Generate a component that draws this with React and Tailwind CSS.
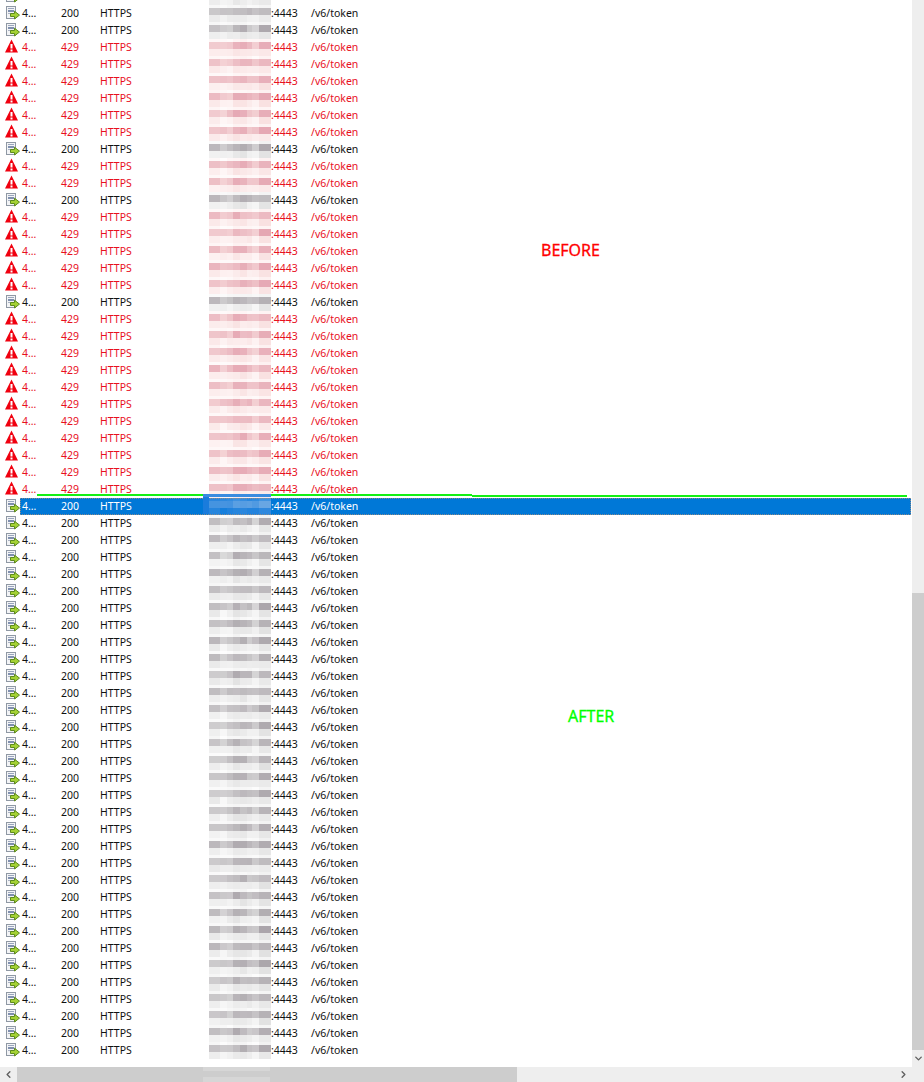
import { ChevronDown, ChevronLeft, ChevronRight } from "lucide-react";

const RED_ROWS = new Set([
  3, 4, 5, 6, 7, 8, 10, 11, 13, 14, 15, 16, 17, 19, 20, 21, 22, 23, 24, 25, 26, 27, 28, 29,
]);
const SELECTED = 30;
const CELL_WIDTHS = [11, 7, 6, 7, 7, 5, 7, 12];
// rough darkness of each mosaic column, the pattern runs down the whole list
const COLUMN_BIAS = [0.45, 0.2, 0.35, 0.75, 0.7, 0.5, 0.3, 0.85];

const hash = (a, b) => {
  const v = Math.sin(a * 12.9898 + b * 78.233) * 43758.5453;
  return v - Math.floor(v);
};

const mix = (from, to, t) => {
  const c = from.map((x, i) => Math.round(x + (to[i] - x) * t));
  return `rgb(${c[0]},${c[1]},${c[2]})`;
};

const PALETTE = {
  normal: { dark: [[226, 226, 226], [164, 158, 164]], light: [[252, 252, 252], [222, 222, 222]], top: [[255, 255, 255], [240, 240, 240]] },
  red: { dark: [[248, 222, 222], [226, 158, 172]], light: [[255, 250, 250], [248, 222, 222]], top: [[255, 255, 255], [253, 238, 238]] },
  selected: { dark: [[40, 132, 222], [116, 172, 228]], light: [[16, 124, 220], [52, 138, 222]], top: [[26, 126, 220], [70, 150, 226]] },
};

const Strip = ({ row, band, height, colors }) => (
  <div className="flex" style={{ height }}>
    {CELL_WIDTHS.map((w, i) => {
      const t = COLUMN_BIAS[i] * 0.65 + hash(row * 3 + band, i + 1) * 0.35;
      return <div key={i} style={{ width: w, background: mix(colors[0], colors[1], t) }} />;
    })}
  </div>
);

const Mosaic = ({ row, tone }) => {
  const p = PALETTE[tone];
  return (
    <div className="flex w-[62px] shrink-0 flex-col">
      <Strip row={row} band={0} height={3} colors={p.top} />
      <Strip row={row} band={1} height={7} colors={p.dark} />
      <Strip row={row} band={2} height={7} colors={p.light} />
    </div>
  );
};

const DocIcon = () => (
  <svg width="15" height="15" viewBox="0 0 15 15" className="block">
    <rect x="1.5" y="1.5" width="9" height="12" fill="#f3f4f6" stroke="#8f98a4" />
    <rect x="3" y="3" width="6" height="1" fill="#9aa6bd" />
    <rect x="3" y="5" width="6" height="2" fill="#7f8fae" />
    <rect x="3" y="8" width="3" height="1" fill="#a9b2c2" />
    <path d="M5.5 8.5h4V6.2l5 3.9-5 3.9v-2.5h-4z" fill="#a4d233" stroke="#5d8a1c" strokeWidth="1" />
  </svg>
);

const WarnIcon = () => (
  <svg width="15" height="15" viewBox="0 0 15 15" className="block">
    <path d="M6.5 0.5 13 13.5H0z" fill="#f0000f" />
    <rect x="5.5" y="5" width="2" height="4.5" fill="#fff" />
    <rect x="5.5" y="10.5" width="2" height="2" fill="#fff" />
  </svg>
);

const Row = ({ index }) => {
  const red = RED_ROWS.has(index);
  const selected = index === SELECTED;
  const tone = selected ? "selected" : red ? "red" : "normal";
  const text = selected ? "text-white" : red ? "text-[#e8101e]" : "text-[#111111]";
  return (
    <div className="mr-px flex h-[17px] items-stretch">
      <div className="w-[20px] shrink-0 pl-[5px]">{red ? <WarnIcon /> : <DocIcon />}</div>
      <div
        className={`flex min-w-0 flex-1 items-stretch leading-[16px] ${text} ${
          selected ? "bg-[#0078d7] outline outline-dotted outline-[#8a8a8a] -outline-offset-1" : ""
        }`}
      >
        <div className="w-[41px] shrink-0 pl-[2px]">4…</div>
        <div className="w-[39px] shrink-0">{red ? "429" : "200"}</div>
        <div className="w-[109px] shrink-0">HTTPS</div>
        <Mosaic row={index} tone={tone} />
        <div className="w-[40px] shrink-0">:4443</div>
        <div>/v6/token</div>
      </div>
    </div>
  );
};

export default function App() {
  const rows = Array.from({ length: 63 }, (_, i) => i);
  return (
    <div className="flex h-[1082px] w-[924px] flex-col overflow-hidden bg-white font-['Noto_Sans',sans-serif] text-[10.5px]">
      <div className="flex min-h-0 flex-1">
        <div className="relative min-w-0 flex-1 overflow-hidden">
          <div className="mt-[-12px]">
            {rows.map((i) => (
              <Row key={i} index={i} />
            ))}
          </div>
          {/* annotations drawn over the capture */}
          <div className="absolute left-[37px] top-[494px] h-[2px] w-[435px] bg-[#14f014]" />
          <div className="absolute left-[472px] top-[495px] h-[2px] w-[435px] bg-[#14f014]" />
          <div className="absolute left-[203px] top-[494px] h-[3px] w-[68px] bg-[#3a8ce0]" />
          <div className="absolute left-[203px] top-[497px] h-[17px] w-[6px] bg-[#1a7cdc]" />
          <div className="absolute left-[541px] top-[239px] text-[16px] leading-[22px] text-[#ff0000] [-webkit-text-stroke:0.3px_#ff0000]">
            BEFORE
          </div>
          <div className="absolute left-[568px] top-[705px] text-[16px] leading-[22px] text-[#00ff00] [-webkit-text-stroke:0.3px_#00ff00]">
            AFTER
          </div>
        </div>
        <div className="flex w-[12px] shrink-0 flex-col bg-[#eeeeee]">
          <div className="h-[593px] shrink-0" />
          <div className="h-[457px] shrink-0 bg-[#cdcdcd]" />
          <div className="flex flex-1 items-center justify-center text-[#606060]">
            <ChevronDown size={11} strokeWidth={3} />
          </div>
        </div>
      </div>
      <div className="relative flex h-[15px] shrink-0 items-center bg-[#eeeeee] text-[#606060]">
        <div className="flex w-[17px] justify-center">
          <ChevronLeft size={11} strokeWidth={3} />
        </div>
        <div className="h-full w-[500px] bg-[#cdcdcd]" />
        <div className="ml-auto mr-[15px]">
          <ChevronRight size={11} strokeWidth={3} />
        </div>
        <div className="absolute left-[203px] top-0 h-[4px] w-[67px] bg-[#d6d6d6]" />
        <div className="absolute left-[203px] top-[10px] h-[5px] w-[67px] bg-[#d6d6d6]" />
      </div>
    </div>
  );
}
